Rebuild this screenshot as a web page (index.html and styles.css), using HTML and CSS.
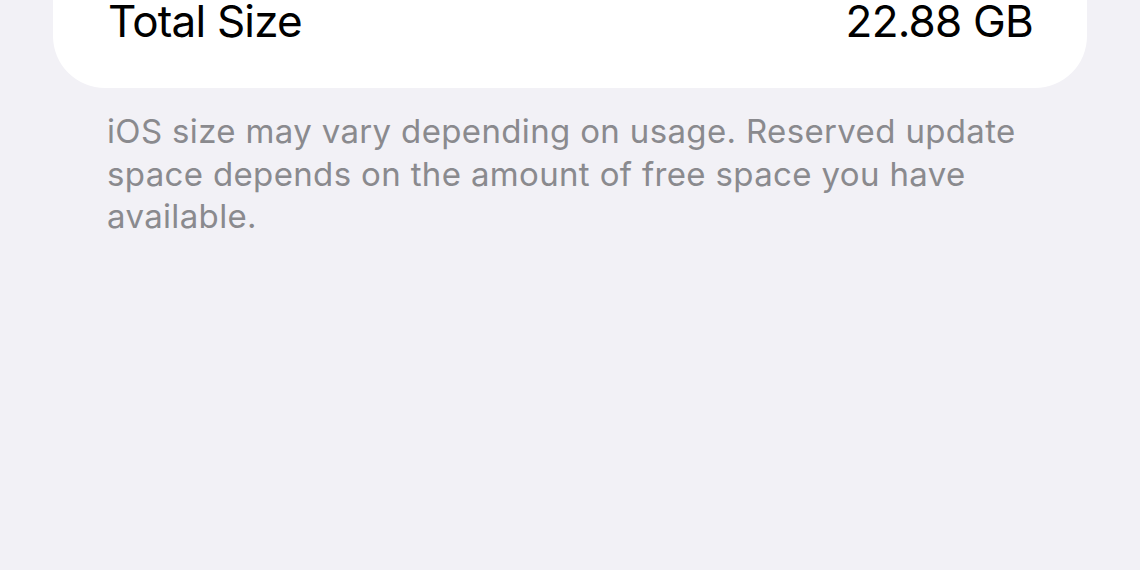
FILE: index.html
```html
<!DOCTYPE html>
<html lang="en">
<head>
  <meta charset="UTF-8">
  <meta name="viewport" content="width=device-width, initial-scale=1.0">
  <title>iPhone Storage</title>
  <link rel="stylesheet" href="styles.css">
</head>
<body>

  <div class="group">
    <div class="row">
      <span class="label">Total Size</span>
      <span class="value">22.88 GB</span>
    </div>
  </div>

  <p class="footnote">iOS size may vary depending on usage. Reserved update space depends on the amount of free space you have available.</p>

</body>
</html>
```

FILE: styles.css
```css
body {
  margin: 0;
  background: #f2f1f6;
  font-family: Inter, "Liberation Sans", sans-serif;
  -webkit-font-smoothing: antialiased;
}
.group {
  margin: 0 53px;
  background: #fff;
  border-radius: 0 0 52px 52px;
  padding: 0 54px 46px 55px;
}
.row {
  display: flex;
  justify-content: space-between;
  align-items: baseline;
  font-size: 44px;
  line-height: 42px;
  letter-spacing: -0.8px;
  color: #000;
}
.footnote {
  margin: 22px 60px 0 107px;
  font-size: 33px;
  line-height: 42.5px;
  letter-spacing: 0.35px;
  color: #8a8a8e;
}
```
